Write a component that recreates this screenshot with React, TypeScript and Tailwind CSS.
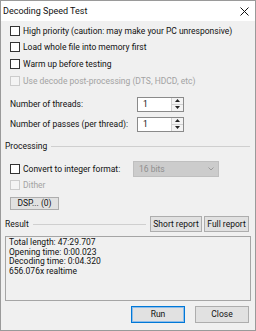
import React from "react";

function Check({ label, disabled }: { label: string; disabled?: boolean }) {
  return (
    <div className="flex items-center h-[14px] pl-[5px]">
      <div
        className={
          disabled
            ? "w-[10px] h-[10px] border border-[#cccccc] bg-[#f4f4f4]"
            : "w-[10px] h-[10px] border border-[#333333] bg-white"
        }
      />
      <span className={disabled ? "ml-[3px] text-[#a3a3a3]" : "ml-[3px]"}>{label}</span>
    </div>
  );
}

function Spin() {
  return (
    <div className="flex w-[47px] h-[15px] border border-[#8a8a8a] bg-white">
      <div className="flex-1 flex items-center pl-[5px]">1</div>
      <div className="w-[12px] flex flex-col border-l border-[#d0d0d0] bg-[#f3f3f3]">
        <div className="flex-1 flex items-center justify-center border-b border-[#d0d0d0]">
          <svg width="5" height="3" viewBox="0 0 5 3">
            <path d="M2.5 0 L5 3 L0 3 Z" fill="#222" />
          </svg>
        </div>
        <div className="flex-1 flex items-center justify-center">
          <svg width="5" height="3" viewBox="0 0 5 3">
            <path d="M0 0 L5 0 L2.5 3 Z" fill="#222" />
          </svg>
        </div>
      </div>
    </div>
  );
}

function Btn({ label, w, def }: { label: string; w: string; def?: boolean }) {
  return (
    <div
      className={
        (def
          ? "border-[#0078d7] shadow-[inset_0_0_0_1px_#8fbde9] "
          : "border-[#adadad] ") +
        w +
        " h-full bg-[#e1e1e1] border flex items-center justify-center"
      }
    >
      {label}
    </div>
  );
}

export default function App() {
  return (
    <div className="w-[256px] h-[331px] bg-[#f0f0f0] border border-[#9a9a9a] flex flex-col font-['Roboto',sans-serif] text-[8.5px] leading-none text-[#111111]">
      <div className="h-[20px] bg-white flex items-center justify-between pl-[2px] pr-[6px] shrink-0">
        <span className="text-[9px]">Decoding Speed Test</span>
        <svg width="9" height="9" viewBox="0 0 9 9">
          <path d="M0.5 0.5 L8.5 8.5 M8.5 0.5 L0.5 8.5" stroke="#111" strokeWidth="1" />
        </svg>
      </div>
      <div className="flex flex-col px-[4px]">
        <div className="mt-[3px]">
          <Check label="High priority (caution: may make your PC unresponsive)" />
        </div>
        <div className="mt-[2px]">
          <Check label="Load whole file into memory first" />
        </div>
        <div className="mt-[3px]">
          <Check label="Warm up before testing" />
        </div>
        <div className="mt-[3px]">
          <Check label="Use decode post-processing (DTS, HDCD, etc)" disabled />
        </div>
        <div className="mt-[8px] h-[16px] flex items-center pl-[5px]">
          <span className="w-[127px]">Number of threads:</span>
          <Spin />
        </div>
        <div className="mt-[4px] h-[16px] flex items-center pl-[5px]">
          <span className="w-[127px]">Number of passes (per thread):</span>
          <Spin />
        </div>
        <div className="mt-[7px] h-[14px] flex items-center">
          <span>Processing</span>
          <div className="flex-1 h-px bg-[#cfcfcf] ml-[4px] mr-[1px]" />
        </div>
        <div className="mt-[8px] h-[16px] flex items-center pl-[5px]">
          <div className="w-[10px] h-[10px] border border-[#333333] bg-white" />
          <span className="ml-[3px] w-[110px]">Convert to integer format:</span>
          <div className="w-[86px] h-[16px] bg-[#cccccc] border border-[#bfbfbf] flex items-center justify-between pl-[5px] pr-[4px] text-[#8f8f8f]">
            <span>16 bits</span>
            <svg width="6" height="4" viewBox="0 0 6 4">
              <path d="M0.5 0.5 L3 3 L5.5 0.5" stroke="#9a9a9a" fill="none" strokeWidth="1" />
            </svg>
          </div>
        </div>
        <div className="mt-[1px]">
          <Check label="Dither" disabled />
        </div>
        <div className="mt-[5px] h-[13px] flex pl-[5px]">
          <Btn label="DSP... (0)" w="w-[49px]" />
        </div>
        <div className="mt-[6px] h-[16px] flex items-center">
          <span>Result</span>
          <div className="flex-1 h-px bg-[#cfcfcf] ml-[4px] mr-[4px]" />
          <div className="h-[16px] flex gap-[2px] mr-[2px]">
            <Btn label="Short report" w="w-[52px]" />
            <Btn label="Full report" w="w-[45px]" />
          </div>
        </div>
        <div className="mt-[4px] h-[65px] border border-[#a5a5a5] pl-[3px] pt-[1px] leading-[9.7px] flex flex-col">
          <span>Total length: 47:29.707</span>
          <span>Opening time: 0:00.023</span>
          <span>Decoding time: 0:04.320</span>
          <span>656.076x realtime</span>
        </div>
        <div className="mt-[5px] h-[17px] flex justify-end gap-[10px] pr-[2px]">
          <Btn label="Run" w="w-[54px]" def />
          <Btn label="Close" w="w-[54px]" />
        </div>
      </div>
    </div>
  );
}
